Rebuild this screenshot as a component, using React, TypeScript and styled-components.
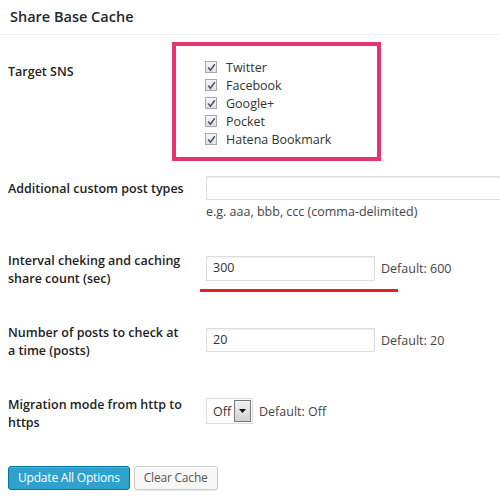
import styled, { createGlobalStyle } from "styled-components";

const sites = ["Twitter", "Facebook", "Google+", "Pocket", "Hatena Bookmark"];

const GlobalStyle = createGlobalStyle`
	html, body {
		margin: 0;
		padding: 0;
		background: #fff;
		overflow: hidden;
	}
	body {
		font-family: "Open Sans", "Noto Sans", sans-serif;
		font-size: 12.5px;
		color: #333;
	}
`;

const Page = styled.div`
	width: 500px;
	height: 500px;
	overflow: hidden;
`;

const Header = styled.h2`
	margin: 0;
	height: 34px;
	padding-left: 10px;
	font-size: 14.5px;
	font-weight: 600;
	line-height: 34px;
	color: #23282d;
	border-bottom: 1px solid #eee;
`;

const Body = styled.div`
	padding: 0 0 0 8px;
`;

const Row = styled.div<{ $top: number }>`
	display: grid;
	grid-template-columns: 198px 1fr;
	align-items: start;
	margin-top: ${(p) => p.$top}px;
`;

const Label = styled.div<{ $top?: number }>`
	width: 179px;
	margin-top: ${(p) => p.$top ?? 0}px;
	font-size: 12.5px;
	font-weight: 600;
	line-height: 18px;
	color: #222;
`;

const Field = styled.div`
	display: flex;
	flex-direction: column;
	align-items: flex-start;
`;

const Inline = styled.div<{ $top?: number }>`
	display: flex;
	align-items: center;
	gap: 6px;
	margin-top: ${(p) => p.$top ?? 0}px;
`;

const Highlight = styled.div`
	box-sizing: border-box;
	margin-left: -34px;
	width: 209px;
	padding: 12px 0 9px 29px;
	border: 4px solid #e8336f;
`;

const CheckRow = styled.label`
	display: flex;
	align-items: center;
	gap: 9px;
	height: 18px;
	font-size: 12.5px;
	color: #333;
`;

const Box = styled.span`
	display: inline-flex;
	align-items: center;
	justify-content: center;
	width: 10px;
	height: 10px;
	border: 1px solid #a4a9b0;
	background: linear-gradient(#f6f6f6, #dfe0e3);
`;

const TextInput = styled.div<{ $width: number; $height?: number }>`
	box-sizing: border-box;
	width: ${(p) => p.$width}px;
	height: ${(p) => p.$height ?? 24}px;
	padding: 0 6px;
	border: 1px solid #ddd;
	box-shadow: inset 0 1px 2px rgba(0, 0, 0, 0.07);
	font-size: 12.5px;
	line-height: 22px;
	color: #333;
	background: #fff;
`;

const Hint = styled.div`
	margin-top: 3px;
	font-size: 12.5px;
	line-height: 18px;
	color: #444;
`;

const Note = styled.span`
	font-size: 12.5px;
	color: #444;
`;

const Underline = styled.div`
	margin: 8px 0 0 -6px;
	width: 198px;
	height: 3px;
	background: #ec1c24;
`;

const Select = styled.div`
	box-sizing: border-box;
	display: flex;
	align-items: center;
	width: 47px;
	height: 26px;
	padding: 1px 1px 1px 6px;
	border: 1px solid #ddd;
	font-size: 12.5px;
	color: #333;
`;

const SelectText = styled.span`
	flex: 1;
`;

const Arrow = styled.span`
	box-sizing: border-box;
	display: flex;
	align-items: center;
	justify-content: center;
	width: 17px;
	height: 22px;
	border: 1px solid #777;
	background: linear-gradient(#f2f2f2, #d2d2d2);
`;

const Actions = styled.div`
	display: flex;
	gap: 4px;
	margin-top: 34px;
`;

const Button = styled.button<{ $primary?: boolean }>`
	height: 24px;
	padding: 0 9px;
	border-radius: 3px;
	font-family: "Open Sans", "Noto Sans", sans-serif;
	font-size: 12px;
	letter-spacing: -0.2px;
	line-height: 22px;
	cursor: pointer;
	border: 1px solid ${(p) => (p.$primary ? "#0074a2" : "#ccc")};
	background: ${(p) => (p.$primary ? "#2ea2cc" : "#f7f7f7")};
	color: ${(p) => (p.$primary ? "#fff" : "#555")};
	box-shadow: ${(p) =>
		p.$primary ? "inset 0 1px 0 rgba(120, 200, 230, 0.5)" : "inset 0 1px 0 #fff, 0 1px 0 rgba(0, 0, 0, 0.08)"};
`;

const Check = () => (
	<svg width="9" height="9" viewBox="0 0 9 9">
		<path d="M1.2 4.6 L3.4 7.2 L7.8 1.2" fill="none" stroke="#4a5468" strokeWidth="1.5" />
	</svg>
);

const App = () => {
	return (
		<Page>
			<GlobalStyle />
			<Header>Share Base Cache</Header>
			<Body>
				<Row $top={7}>
					<Label $top={21}>Target SNS</Label>
					<Highlight>
						{sites.map((site) => (
							<CheckRow key={site}>
								<Box>
									<Check />
								</Box>
								{site}
							</CheckRow>
						))}
					</Highlight>
				</Row>

				<Row $top={15}>
					<Label $top={4}>Additional custom post types</Label>
					<Field>
						<TextInput $width={300} />
						<Hint>e.g. aaa, bbb, ccc (comma-delimited)</Hint>
					</Field>
				</Row>

				<Row $top={31}>
					<Label>Interval cheking and caching share count (sec)</Label>
					<Field>
						<Inline $top={4}>
							<TextInput $width={169} $height={25}>300</TextInput>
							<Note>Default: 600</Note>
						</Inline>
						<Underline />
					</Field>
				</Row>

				<Row $top={32}>
					<Label>Number of posts to check at a time (posts)</Label>
					<Inline $top={4}>
						<TextInput $width={169}>20</TextInput>
						<Note>Default: 20</Note>
					</Inline>
				</Row>

				<Row $top={36}>
					<Label>Migration mode from http to https</Label>
					<Inline $top={2}>
						<Select>
							<SelectText>Off</SelectText>
							<Arrow>
								<svg width="7" height="4" viewBox="0 0 7 4">
									<path d="M0 0 H7 L3.5 4 Z" fill="#111" />
								</svg>
							</Arrow>
						</Select>
						<Note>Default: Off</Note>
					</Inline>
				</Row>

				<Actions>
					<Button $primary>Update All Options</Button>
					<Button>Clear Cache</Button>
				</Actions>
			</Body>
		</Page>
	);
};

export default App;
